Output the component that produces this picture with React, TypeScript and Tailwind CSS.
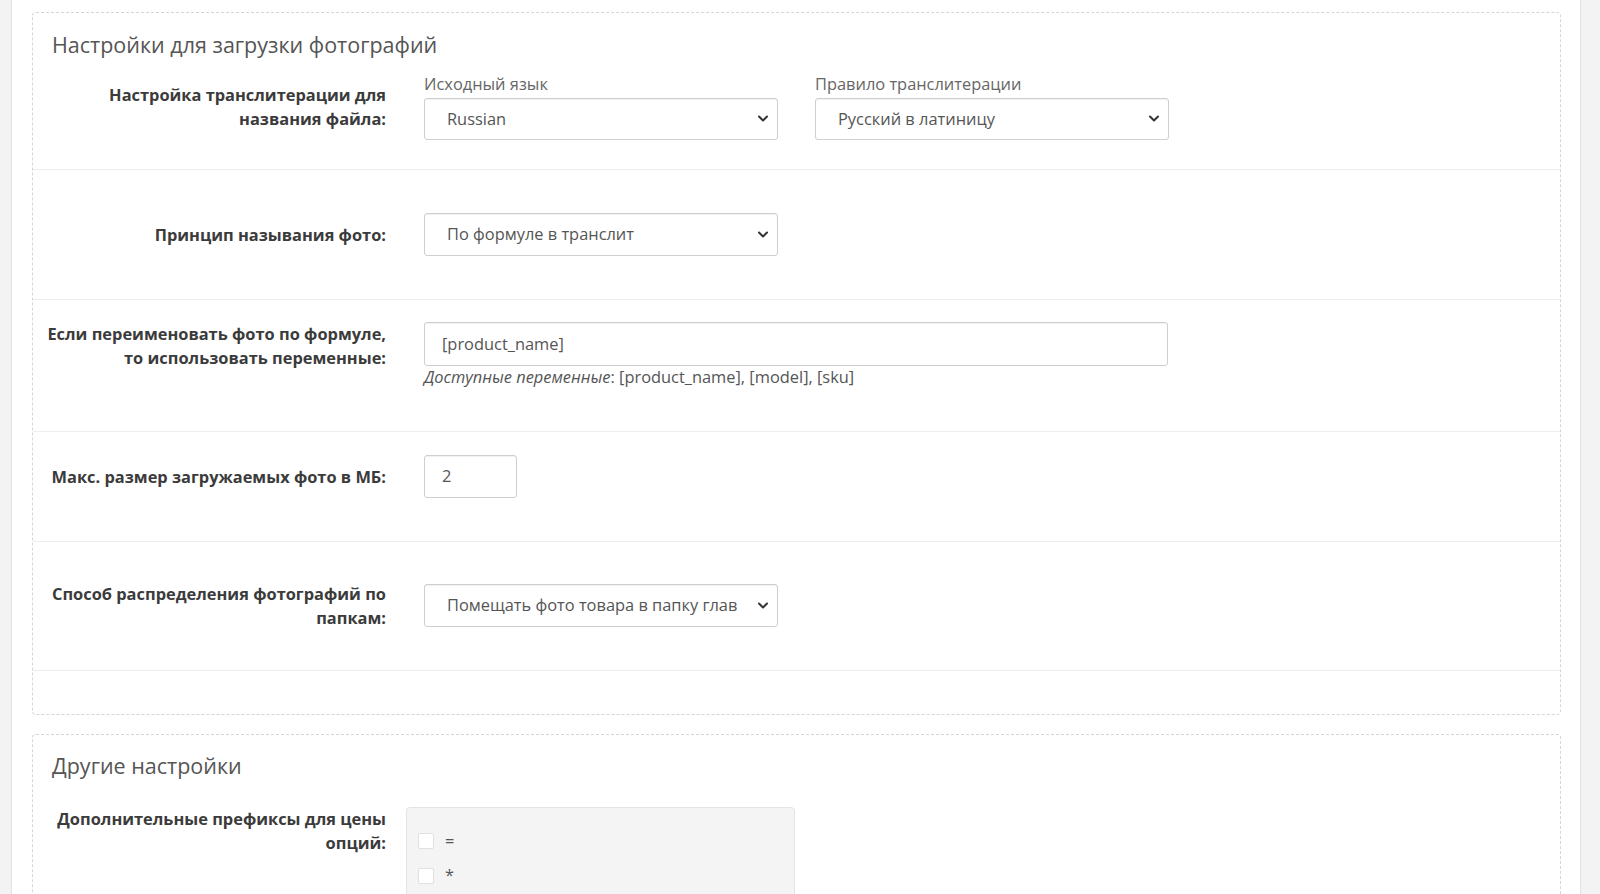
import type { ReactNode } from 'react';

function Chevron() {
    return (
        <svg width="12" height="8" viewBox="0 0 12 8" className="shrink-0">
            <polyline points="2,1.5 6,5.5 10,1.5" fill="none" stroke="#333" strokeWidth="2" strokeLinecap="round" strokeLinejoin="round" />
        </svg>
    );
}

function FakeSelect({ value, height = 'h-[43px]' }: { value: string; height?: string }) {
    return (
        <div className={`${height} w-[354px] flex items-center justify-between pl-[22px] pr-[8px] bg-white border border-[#cfcfcf] rounded-[3px] shadow-[inset_0_1px_1px_rgba(0,0,0,0.06)] text-[16.4px] text-[#555]`}>
            <span className="whitespace-nowrap overflow-hidden">{value}</span>
            <Chevron />
        </div>
    );
}

function Row({ label, children, align = 'items-center', className = '' }: { label: ReactNode; children: ReactNode; align?: string; className?: string }) {
    return (
        <div className={`flex ${align} border-b border-[#ededed] ${className}`}>
            <div className="w-[353px] shrink-0 text-right text-[16.4px] leading-[23.5px] font-bold text-[#3b3b3b] whitespace-nowrap">
                {label}
            </div>
            <div className="ml-[38px]">{children}</div>
        </div>
    );
}

export default function App() {
    return (
        <div className="min-h-screen h-[894px] overflow-hidden flex bg-[#f3f3f3] font-['Open_Sans',sans-serif]">
            {/* left rail */}
            <div className="w-[12px] shrink-0 border-r border-[#e2e2e2]" />

            <main className="flex-1 bg-white pl-[20px] pr-[19px] pt-[12px]">

                {/* Photo upload settings */}
                <section className="border border-dashed border-[#d6d6d6] rounded-[4px] pb-[43px]">
                    <h2 className="pl-[19px] pt-[17px] text-[21.5px] leading-[30px] text-[#555]">Настройки для загрузки фотографий</h2>

                    <Row label={<>Настройка транслитерации для<br />названия файла:</>} className="pt-[13px] pb-[29px]">
                        <div className="flex gap-[37px]">
                            <div>
                                <div className="text-[16.4px] leading-[22px] text-[#666] mb-[3px]">Исходный язык</div>
                                <FakeSelect value="Russian" height="h-[42px]" />
                            </div>
                            <div>
                                <div className="text-[16.4px] leading-[22px] text-[#666] mb-[3px]">Правило транслитерации</div>
                                <FakeSelect value="Русский в латиницу" height="h-[42px]" />
                            </div>
                        </div>
                    </Row>

                    <Row label="Принцип называния фото:" className="pt-[43px] pb-[43px]">
                        <FakeSelect value="По формуле в транслит" />
                    </Row>

                    <Row label={<>Если переименовать фото по формуле,<br />то использовать переменные:</>} align="items-start" className="pt-[22px] pb-[43px]">
                        <div className="w-[744px] h-[44px] flex items-center pl-[17px] border border-[#cfcfcf] rounded-[3px] shadow-[inset_0_1px_1px_rgba(0,0,0,0.06)] text-[16.4px] text-[#555]">
                            [product_name]
                        </div>
                        <div className="text-[16.4px] leading-[22px] text-[#555]">
                            <i>Доступные переменные</i>: [product_name], [model], [sku]
                        </div>
                    </Row>

                    <Row label="Макс. размер загружаемых фото в МБ:" className="pt-[23px] pb-[43px]">
                        <div className="w-[93px] h-[43px] flex items-center pl-[17px] border border-[#cfcfcf] rounded-[3px] shadow-[inset_0_1px_1px_rgba(0,0,0,0.06)] text-[16.4px] text-[#555]">
                            2
                        </div>
                    </Row>

                    <Row label={<>Способ распределения фотографий по<br />папкам:</>} className="pt-[40px] pb-[41px]">
                        <FakeSelect value="Помещать фото товара в папку глав" />
                    </Row>
                </section>

                {/* Other settings */}
                <section className="mt-[19px] border border-dashed border-[#d6d6d6] rounded-[4px] pb-[40px]">
                    <h2 className="pl-[19px] pt-[16px] text-[21.5px] leading-[30px] text-[#555]">Другие настройки</h2>

                    <div className="flex items-start pt-[26px]">
                        <div className="w-[353px] shrink-0 text-right text-[16.4px] leading-[23.5px] font-bold text-[#3b3b3b] whitespace-nowrap">
                            Дополнительные префиксы для цены<br />опций:
                        </div>
                        <div className="ml-[20px] w-[389px] bg-[#f4f4f4] border border-[#e4e4e4] rounded-[4px] pl-[11px] pt-[16px] pb-[20px]">
                            {['=', '*', '+', '-'].map((sign) => (
                                <label key={sign} className="flex items-center gap-[11px] h-[34.5px] text-[16.4px] text-[#555]">
                                    <span className="w-[16px] h-[16px] bg-white border border-[#e0e0e0] rounded-[2px]" />
                                    {sign}
                                </label>
                            ))}
                        </div>
                    </div>
                </section>
            </main>

            {/* right rail */}
            <div className="w-[20px] shrink-0 border-l border-[#e2e2e2]" />
        </div>
    );
}
